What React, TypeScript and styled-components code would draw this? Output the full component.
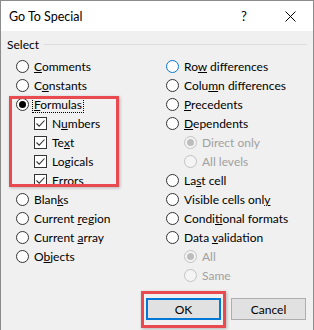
import styled, { createGlobalStyle } from 'styled-components';

const GlobalStyle = createGlobalStyle`
  html, body {
    margin: 0;
    padding: 0;
    background: #ffffff;
  }
  body {
    font-family: Lato, "Liberation Sans", sans-serif;
    font-size: 12px;
    color: #000000;
  }
`;

const Window = styled.div`
  width: 314px;
  height: 330px;
  box-sizing: border-box;
  border: 1px solid #8c8c8c;
  border-bottom: none;
  background: #f0f0f0;
  display: flex;
  flex-direction: column;
  overflow: hidden;
`;

const TitleBar = styled.div`
  height: 30px;
  background: #ffffff;
  display: flex;
  align-items: center;
  padding-left: 8px;
  flex-shrink: 0;
`;

const Title = styled.div`
  flex: 1;
  font-size: 12.5px;
`;

const TitleButton = styled.div`
  width: 46px;
  display: flex;
  justify-content: center;
  align-items: center;
  font-size: 13px;
`;

const GroupHeader = styled.div`
  display: flex;
  align-items: center;
  margin-top: 7px;
  height: 13px;
  padding-left: 6px;
  padding-right: 6px;
`;

const GroupLine = styled.div`
  flex: 1;
  height: 1px;
  background: #dcdcdc;
  margin-left: 5px;
`;

const Columns = styled.div`
  display: grid;
  grid-template-columns: 150px 1fr;
  margin-top: 6px;
  padding-left: 15px;
`;

const Column = styled.div`
  display: flex;
  flex-direction: column;
`;

const Row = styled.div<{ $indent?: boolean; $disabled?: boolean }>`
  height: 19px;
  display: flex;
  align-items: center;
  gap: 5px;
  padding-left: ${(p) => (p.$indent ? '18px' : '0')};
  color: ${(p) => (p.$disabled ? '#a0a0a0' : '#000000')};
  white-space: nowrap;
`;

const Radio = styled.span<{ $checked?: boolean; $disabled?: boolean; $focus?: boolean }>`
  width: 13px;
  height: 13px;
  box-sizing: border-box;
  border-radius: 50%;
  border: 1px solid
    ${(p) => (p.$focus ? '#0078d7' : p.$disabled ? '#c2c2c2' : '#333333')};
  background: ${(p) => (p.$disabled ? '#f4f4f4' : '#ffffff')};
  display: flex;
  align-items: center;
  justify-content: center;
  flex-shrink: 0;

  &::after {
    content: '';
    width: 7px;
    height: 7px;
    border-radius: 50%;
    background: ${(p) => (p.$disabled ? '#bdbdbd' : '#000000')};
    display: ${(p) => (p.$checked ? 'block' : 'none')};
  }
`;

const Check = styled.span`
  width: 13px;
  height: 13px;
  box-sizing: border-box;
  border: 1px solid #333333;
  background: #ffffff;
  display: flex;
  align-items: center;
  justify-content: center;
  flex-shrink: 0;
`;

const Focused = styled.span`
  outline: 1px dotted #000000;
  outline-offset: 0;
  padding: 0 1px;
  margin-left: -1px;
  line-height: 14px;
`;

const Highlight = styled.div`
  position: relative;

  &::after {
    content: '';
    position: absolute;
    top: 1px;
    bottom: 3px;
    left: -7px;
    width: 110px;
    box-sizing: border-box;
    border: 3px solid #e84a4f;
    box-shadow: 1px 1px 3px rgba(0, 0, 0, 0.25);
    pointer-events: none;
  }
`;

const ButtonRow = styled.div`
  margin-top: auto;
  display: flex;
  justify-content: flex-end;
  gap: 10px;
  padding-right: 7px;
  padding-bottom: 10px;
`;

const Button = styled.div<{ $default?: boolean }>`
  width: 75px;
  height: 22px;
  box-sizing: border-box;
  background: #e1e1e1;
  border: ${(p) => (p.$default ? '2px solid #0078d7' : '1px solid #adadad')};
  display: flex;
  align-items: center;
  justify-content: center;
`;

const ButtonMark = styled.div`
  position: relative;

  &::after {
    content: '';
    position: absolute;
    top: -7px;
    bottom: -8px;
    left: -5px;
    right: -5px;
    border: 3px solid #e84a4f;
    box-shadow: 1px 1px 3px rgba(0, 0, 0, 0.25);
    pointer-events: none;
  }
`;

const CheckMark = () => (
  <svg width="11" height="11" viewBox="0 0 11 11">
    <polyline points="1.5,5.5 4.2,8.2 9.5,2.5" fill="none" stroke="#333" strokeWidth="1.1" />
  </svg>
);

const CloseIcon = () => (
  <svg width="11" height="11" viewBox="0 0 11 11">
    <path d="M0.5 0.5 L10.5 10.5 M10.5 0.5 L0.5 10.5" stroke="#000" strokeWidth="1" />
  </svg>
);

type Opt = {
  pre: string;
  acc?: string;
  post?: string;
  checked?: boolean;
  disabled?: boolean;
  focus?: boolean;
  indent?: boolean;
};

const Label = ({ pre, acc, post }: Opt) => (
  <span>
    {pre}
    {acc && <u>{acc}</u>}
    {post}
  </span>
);

const RadioRow = (o: Opt) => (
  <Row $indent={o.indent} $disabled={o.disabled}>
    <Radio $checked={o.checked} $disabled={o.disabled} $focus={o.focus} />
    <Label {...o} />
  </Row>
);

const CheckRow = (o: Opt) => (
  <Row $indent>
    <Check>
      <CheckMark />
    </Check>
    <Label {...o} />
  </Row>
);

export default function App() {
  return (
    <>
      <GlobalStyle />
      <Window>
        <TitleBar>
          <Title>Go To Special</Title>
          <TitleButton>?</TitleButton>
          <TitleButton>
            <CloseIcon />
          </TitleButton>
        </TitleBar>

        <GroupHeader>
          <span>Select</span>
          <GroupLine />
        </GroupHeader>

        <Columns>
          <Column>
            <RadioRow pre="" acc="C" post="omments" />
            <RadioRow pre="C" acc="o" post="nstants" />
            <Highlight>
              <Row>
                <Radio $checked />
                <Focused>
                  <u>F</u>ormulas
                </Focused>
              </Row>
              <CheckRow pre="N" acc="u" post="mbers" />
              <CheckRow pre="Te" acc="x" post="t" />
              <CheckRow pre="Lo" acc="g" post="icals" />
              <CheckRow pre="" acc="E" post="rrors" />
            </Highlight>
            <RadioRow pre="Blan" acc="k" post="s" />
            <RadioRow pre="Current " acc="r" post="egion" />
            <RadioRow pre="Current " acc="a" post="rray" />
            <RadioRow pre="O" acc="b" post="jects" />
          </Column>
          <Column>
            <RadioRow pre="Ro" acc="w" post=" differences" focus />
            <RadioRow pre="Colu" acc="m" post="n differences" />
            <RadioRow pre="" acc="P" post="recedents" />
            <RadioRow pre="" acc="D" post="ependents" />
            <RadioRow pre="Direct only" indent disabled checked />
            <RadioRow pre="All levels" indent disabled />
            <RadioRow pre="La" acc="s" post="t cell" />
            <RadioRow pre="Visible cells onl" acc="y" />
            <RadioRow pre="Condi" acc="t" post="ional formats" />
            <RadioRow pre="Data " acc="v" post="alidation" />
            <RadioRow pre="All" indent disabled checked />
            <RadioRow pre="Same" indent disabled />
          </Column>
        </Columns>

        <ButtonRow>
          <ButtonMark>
            <Button $default>OK</Button>
          </ButtonMark>
          <Button>Cancel</Button>
        </ButtonRow>
      </Window>
    </>
  );
}
